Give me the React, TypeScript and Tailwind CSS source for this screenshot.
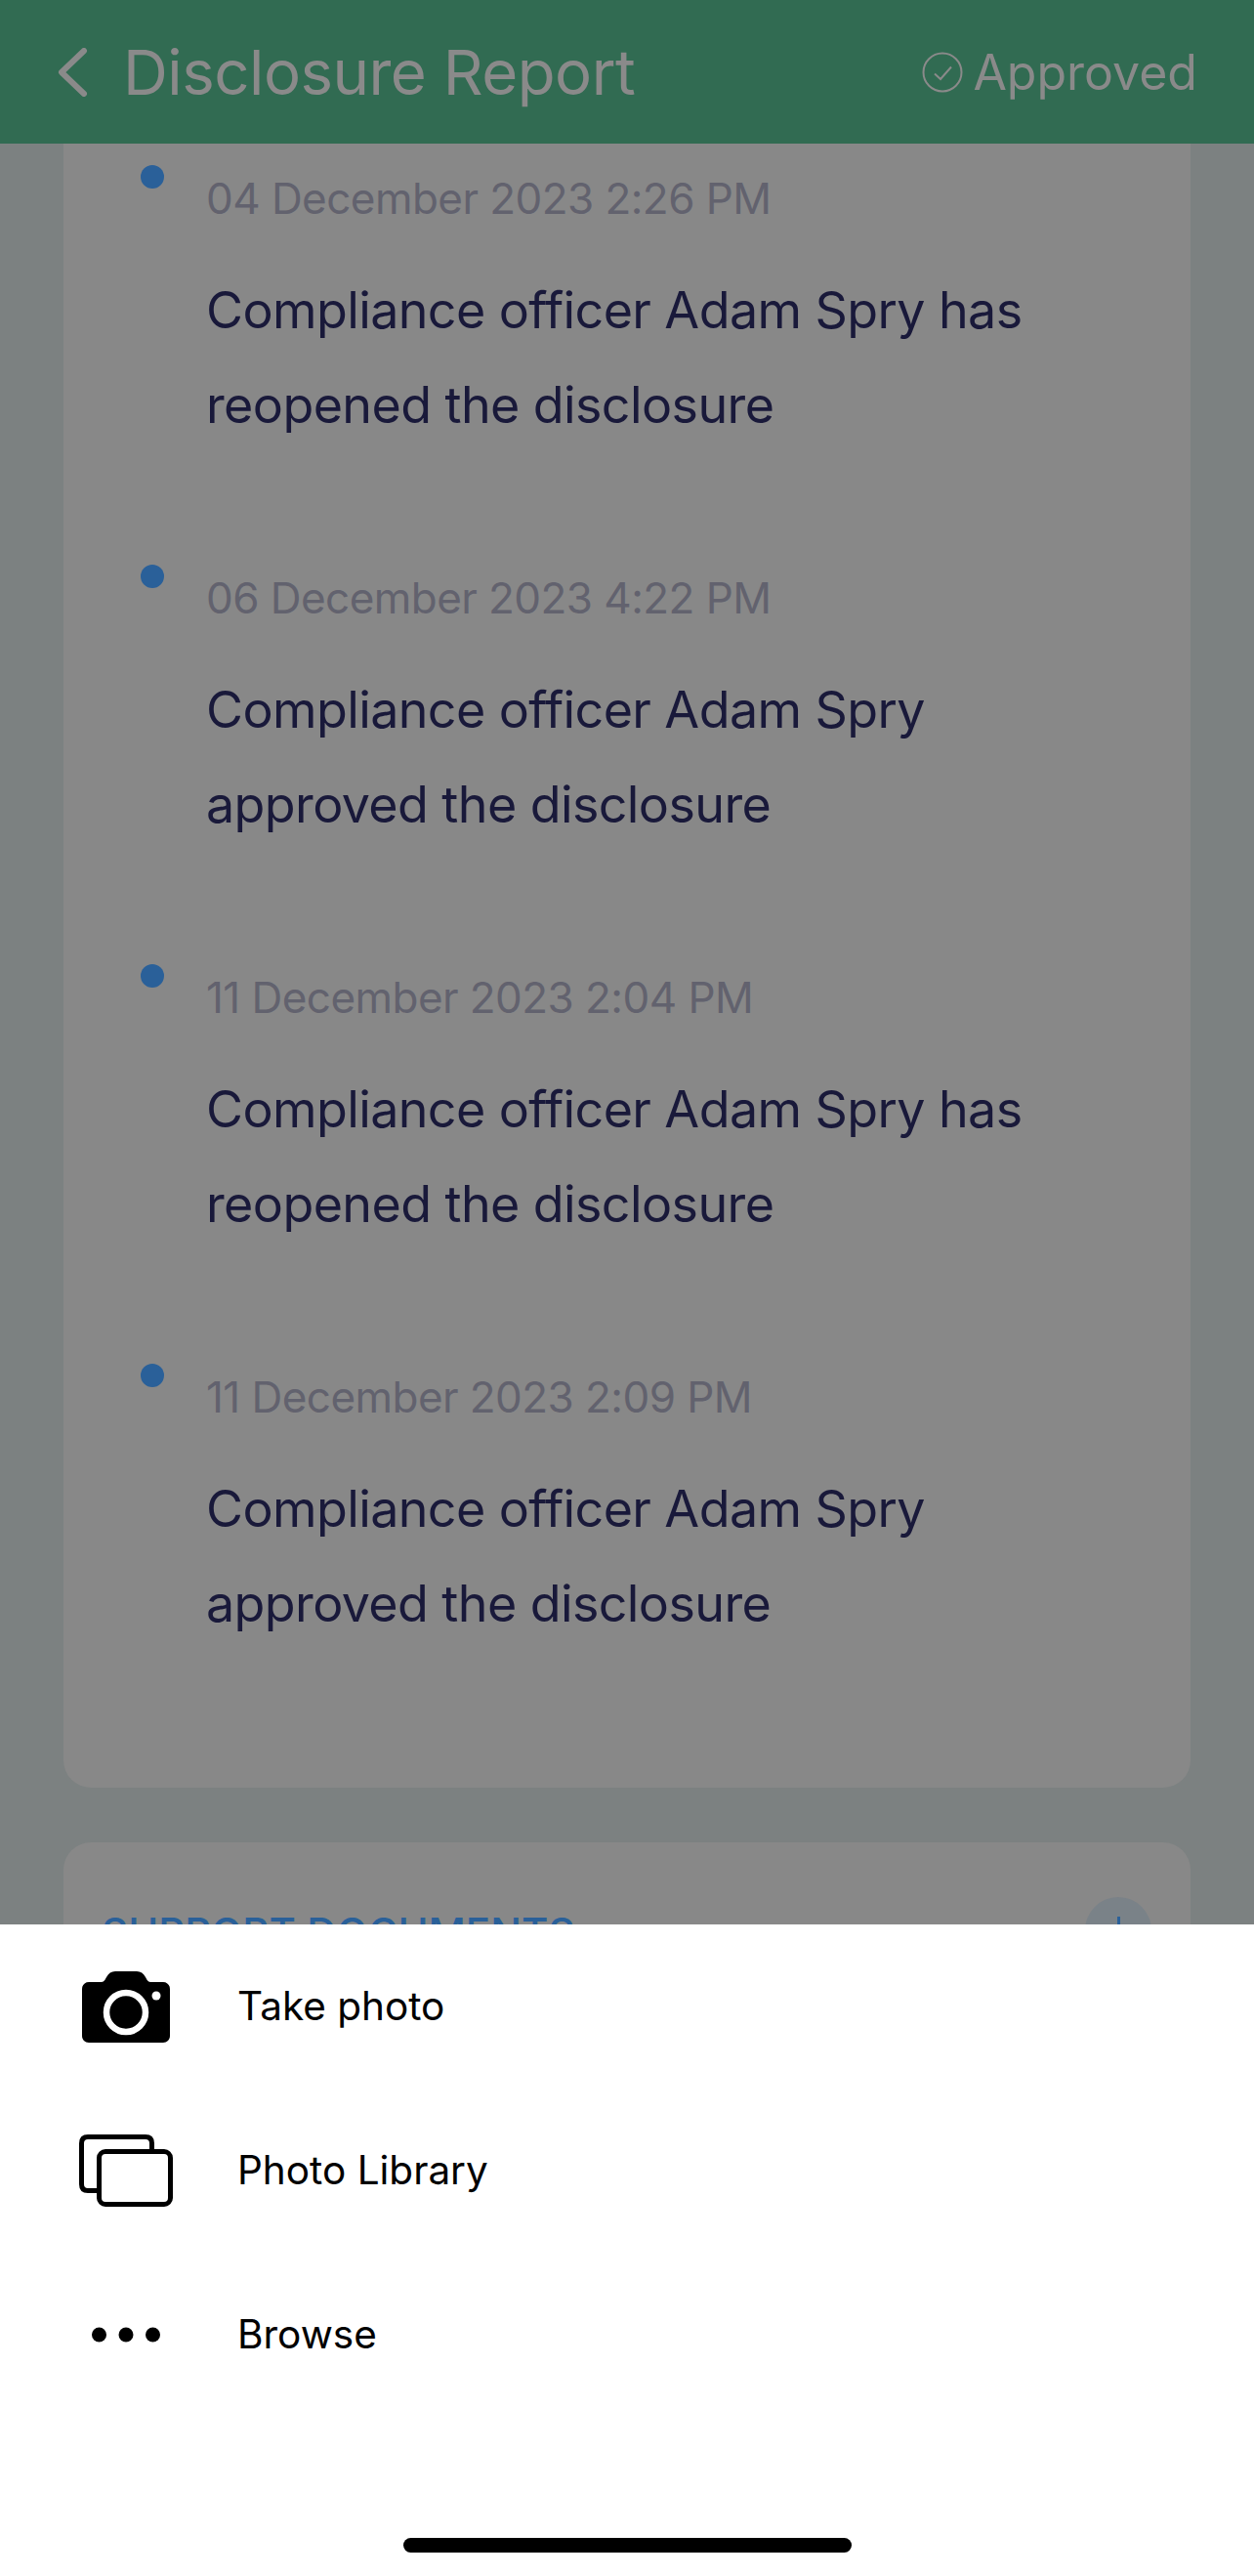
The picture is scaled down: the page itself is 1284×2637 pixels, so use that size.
import React from "react";

const items = [
  ["04 December 2023 2:26 PM", "Compliance officer Adam Spry has", "reopened the disclosure"],
  ["06 December 2023 4:22 PM", "Compliance officer Adam Spry", "approved the disclosure"],
  ["11 December 2023 2:04 PM", "Compliance officer Adam Spry has", "reopened the disclosure"],
  ["11 December 2023 2:09 PM", "Compliance officer Adam Spry", "approved the disclosure"],
];

function Camera() {
  return (
    <svg width="90" height="73" viewBox="0 0 90 73">
      <path d="M7 11H19C22 11 23 10 25 6C27 2 30 0 34 0H56C60 0 63 2 65 6C67 10 68 11 71 11H83C87 11 90 14 90 18V66C90 70 87 73 83 73H7C3 73 0 70 0 66V18C0 14 3 11 7 11Z" fill="#000" />
      <circle cx="45" cy="42" r="20" fill="none" stroke="#fff" strokeWidth="6.5" />
      <circle cx="76" cy="25" r="4.5" fill="#fff" />
    </svg>
  );
}

function Library() {
  return (
    <svg width="96" height="74" viewBox="0 0 96 74" fill="none" stroke="#000" strokeWidth="5">
      <path d="M18 57.5H9Q2.5 57.5 2.5 51V9Q2.5 2.5 9 2.5H68Q74.5 2.5 74.5 9V15" />
      <rect x="20.5" y="17.5" width="73" height="54" rx="6.5" />
    </svg>
  );
}

function Dots() {
  return (
    <svg width="70" height="16" viewBox="0 0 70 16" fill="#000">
      <circle cx="7.5" cy="8" r="7.5" />
      <circle cx="35" cy="8" r="7.5" />
      <circle cx="62.5" cy="8" r="7.5" />
    </svg>
  );
}

export default function App() {
  return (
    <div className="w-[1284px] h-[2637px] flex flex-col overflow-hidden bg-[#7c8181] font-['Inter','Liberation_Sans',sans-serif]">
      <header className="h-[147px] shrink-0 bg-[#316b52] flex items-start justify-between pl-[57px] pr-[58px] text-[#8a8a8a]">
        <div className="flex items-center h-[147px]">
          <svg width="34" height="50" viewBox="0 0 34 50" fill="none" stroke="#8a8a8a" strokeWidth="6" strokeLinecap="round" strokeLinejoin="round">
            <path d="M29 3L6 25L29 47" />
          </svg>
          <span className="ml-[35px] text-[63.5px] leading-none tracking-[-0.5px]">Disclosure Report</span>
        </div>
        <div className="flex items-center h-[147px]">
          <svg width="42" height="42" viewBox="0 0 42 42" fill="none" stroke="#8a8a8a" strokeWidth="2">
            <circle cx="21" cy="21" r="19.5" />
            <path d="M13 22.5L19 28L30 15.5" />
          </svg>
          <span className="ml-[10px] text-[50px] leading-none">Approved</span>
        </div>
      </header>

      <main className="h-[1823px] shrink-0 overflow-hidden px-[65px]">
        <section className="h-[1683px] rounded-b-[28px] bg-[#888888] pt-[22px] pl-[79px]">
          {items.map(([date, a, b]) => (
            <div key={date} className="flex gap-[43px] h-[409px]">
              <div className="w-[24px] h-[24px] rounded-full bg-[#2a6099] shrink-0" />
              <div>
                <div className="h-[68px] leading-[68px] text-[44px] tracking-[-0.55px] text-[#62626e] mb-[32px] whitespace-nowrap">{date}</div>
                <div className="text-[52px] leading-[97px] tracking-[-0.6px] text-[#19193a] whitespace-nowrap">{a}<br />{b}</div>
              </div>
            </div>
          ))}
        </section>
        <section className="mt-[56px] h-[200px] rounded-t-[28px] bg-[#888888] px-[39px] pt-[66px] flex justify-between">
          <span className="text-[42px] leading-[54px] font-medium text-[#2a6099] whitespace-nowrap">SUPPORT DOCUMENTS</span>
          <div className="w-[68px] h-[68px] rounded-full bg-[#7a8288] flex justify-center mr-[1px] -mt-[10px]">
            <div className="w-[3px] h-[30px] mt-[20px] bg-[#2a6099]" />
          </div>
        </section>
      </main>

      <footer className="flex-1 bg-white relative text-[40.5px] text-black">
        <div className="flex flex-col">
          {[["Take photo", <Camera />], ["Photo Library", <Library />], ["Browse", <Dots />]].map(([label, icon], i) => (
            <div key={i} className="h-[168px] flex items-center">
              <div className="w-[243px] pl-[80px] pr-[65px] flex justify-center shrink-0">{icon}</div>
              <span>{label}</span>
            </div>
          ))}
        </div>
        <div className="absolute left-[413px] bottom-[24px] w-[459px] h-[15px] rounded-full bg-black" />
      </footer>
    </div>
  );
}
